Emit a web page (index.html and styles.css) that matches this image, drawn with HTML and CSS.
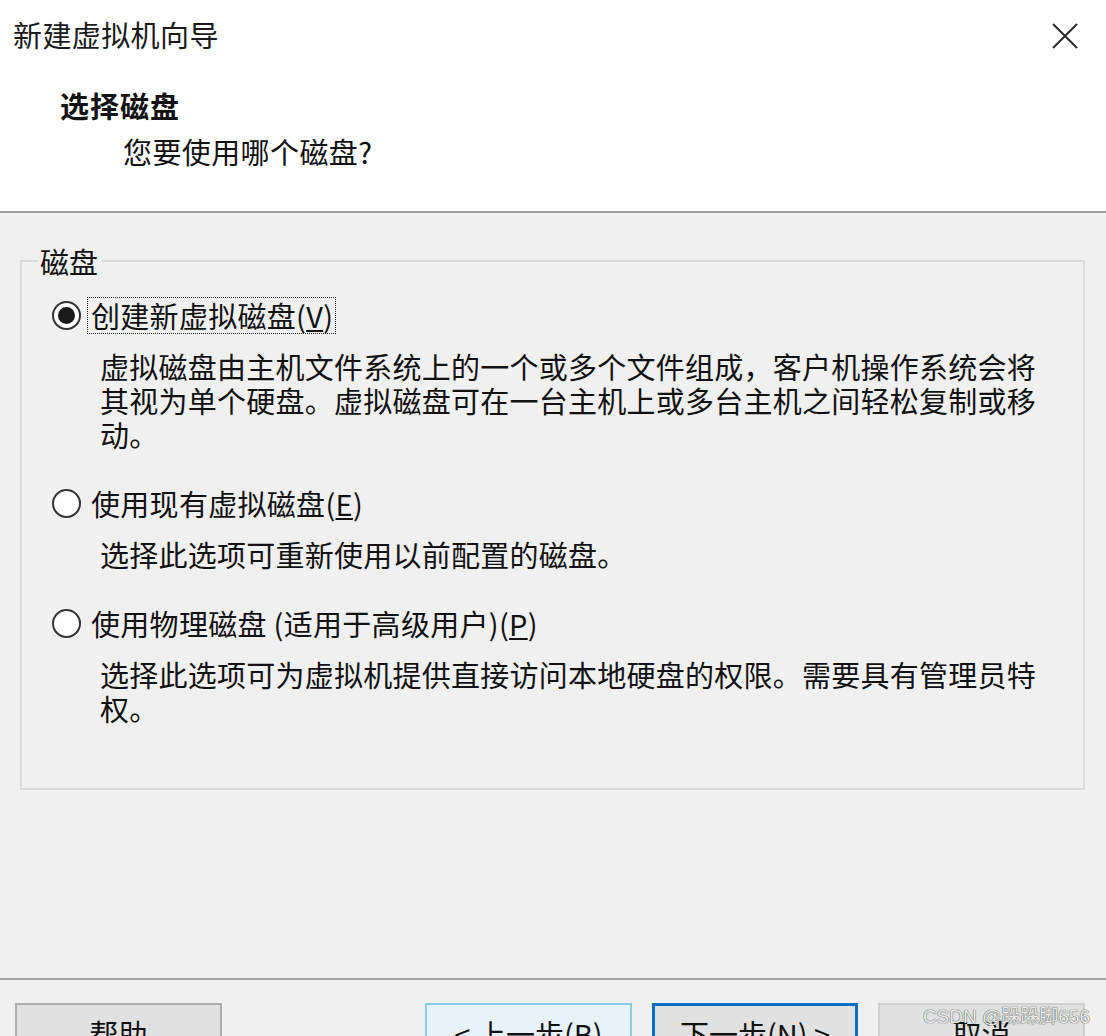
FILE: index.html
```html
<!DOCTYPE html>
<html>
    <head>
        <title>新建虚拟机向导</title>
        <meta charset="UTF-8">
        <link rel="stylesheet" href="styles.css">
    </head>
    <body>
        <div class="window">
            <div class="header">
                <div class="titlebar">
                    <div class="title">新建虚拟机向导</div>
                    <svg class="close" width="26" height="26" viewBox="0 0 26 26">
                        <path d="M1 1 L25 25 M25 1 L1 25" stroke="#2b2b2b" stroke-width="2" fill="none"/>
                    </svg>
                </div>
                <div class="heading">选择磁盘</div>
                <div class="subheading">您要使用哪个磁盘?</div>
            </div>

            <div class="main">
                <fieldset class="group">
                    <legend>磁盘</legend>

                    <div class="option">
                        <span class="radio checked"></span>
                        <span class="label focused">创建新虚拟磁盘(<u>V</u>)</span>
                    </div>
                    <p class="desc">虚拟磁盘由主机文件系统上的一个或多个文件组成，客户机操作系统会将其视为单个硬盘。虚拟磁盘可在一台主机上或多台主机之间轻松复制或移动。</p>

                    <div class="option">
                        <span class="radio"></span>
                        <span class="label">使用现有虚拟磁盘(<u>E</u>)</span>
                    </div>
                    <p class="desc">选择此选项可重新使用以前配置的磁盘。</p>

                    <div class="option">
                        <span class="radio"></span>
                        <span class="label">使用物理磁盘 (适用于高级用户)(<u>P</u>)</span>
                    </div>
                    <p class="desc">选择此选项可为虚拟机提供直接访问本地硬盘的权限。需要具有管理员特权。</p>
                </fieldset>
            </div>

            <div class="footer">
                <button class="btn">帮助</button>
                <div class="nav">
                    <button class="btn hover">&lt; 上一步(<u>B</u>)</button>
                    <button class="btn default">下一步(<u>N</u>) &gt;</button>
                    <button class="btn cancel">取消</button>
                </div>
            </div>

            <div class="watermark">CSDN @跺跺脚656</div>
        </div>
    </body>
</html>
```

FILE: styles.css
```css
html, body {
    margin: 0;
    padding: 0;
}

body {
    background: #f0f0f0;
    font-family: "Noto Sans CJK SC", "Noto Sans", sans-serif;
    font-size: 29px;
    color: #111;
    overflow: hidden;
}

.window {
    position: relative;
    height: 1036px;
    display: flex;
    flex-direction: column;
    overflow: hidden;
}

.header {
    background: #fff;
    height: 213px;
    box-sizing: border-box;
    padding: 14px 28px 0 13px;
    border-bottom: 2px solid #a3a3a3;
}

.titlebar {
    display: flex;
    justify-content: space-between;
    align-items: center;
    height: 40px;
}

.title {
    line-height: 40px;
    letter-spacing: 0.4px;
    color: #1a1a1a;
}

.close {
    margin-top: 4px;
}

.heading {
    margin: 33px 0 0 47px;
    font-weight: bold;
    line-height: 36px;
    letter-spacing: 1px;
}

.subheading {
    margin: 11px 0 0 110px;
    line-height: 34px;
    letter-spacing: 0.4px;
}

.main {
    flex: 1;
    padding: 31px 21px 0 20px;
}

.group {
    margin: 0;
    padding: 19px 16px 63px 16px;
    border: 2px solid #dadada;
}

.group legend {
    padding: 0 4px 0 2px;
    line-height: 34px;
}

.option {
    display: flex;
    align-items: center;
    height: 37px;
    margin: 34px 0 0 14px;
}

.group legend + .option {
    margin-top: 0;
}

.radio {
    width: 29px;
    height: 29px;
    box-sizing: border-box;
    border: 2px solid #333;
    border-radius: 50%;
    background: #fff;
    display: flex;
    align-items: center;
    justify-content: center;
    margin-right: 6px;
}

.radio.checked::after {
    content: "";
    width: 17px;
    height: 17px;
    border-radius: 50%;
    background: #1a1a1a;
}

.label {
    line-height: 35px;
    border: 1px dotted transparent;
    padding: 0 2px 0 3px;
    letter-spacing: 0.3px;
}

.label.focused {
    border-color: #222;
}

.desc {
    margin: 15px 0 0 62px;
    width: 945px;
    line-height: 34px;
    letter-spacing: 0.25px;
}

.footer {
    height: 58px;
    box-sizing: border-box;
    border-top: 2px solid #a3a3a3;
    padding: 23px 21px 0 15px;
    display: flex;
    justify-content: space-between;
}

.nav {
    display: flex;
    gap: 20px;
}

.btn {
    width: 207px;
    height: 60px;
    font-family: inherit;
    font-size: 29px;
    color: #111;
    background: #e1e1e1;
    border: 2px solid #adadad;
    padding: 0;
    line-height: 50px;
    align-self: flex-start;
    text-align: center;
}

.btn.hover {
    background: #e8f2fa;
    border-color: #8ccbe6;
}

.btn.default {
    border: 3px solid #0a6fc2;
    width: 206px;
}

.btn.cancel {
    border-color: #cfcfcf;
}

.watermark {
    position: absolute;
    right: 16px;
    bottom: 8px;
    font-family: "Liberation Sans", "Noto Sans CJK SC", sans-serif;
    font-size: 19px;
    color: rgba(255, 255, 255, 0.9);
    text-shadow: 0 0 1px #555, 0 0 1px #555;
}
```
